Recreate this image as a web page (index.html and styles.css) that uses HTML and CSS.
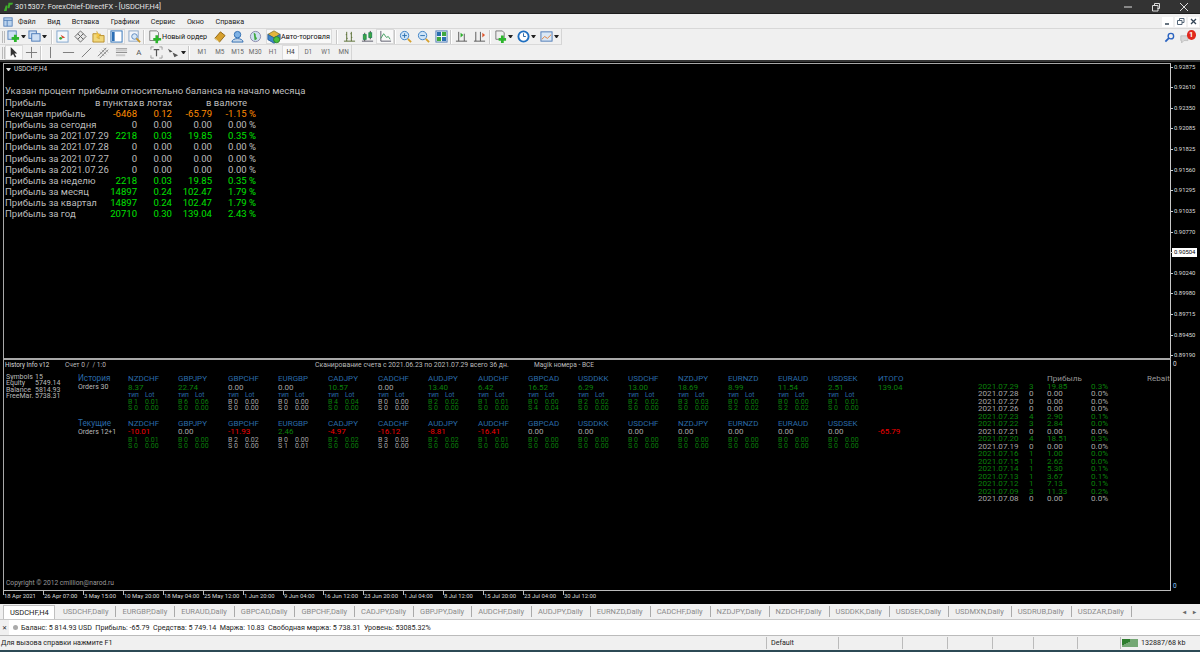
FILE: index.html
```html
<!DOCTYPE html>
<html lang="ru">
<head>
<meta charset="utf-8">
<title>3015307: ForexChief-DirectFX - [USDCHF,H4]</title>
<link rel="stylesheet" href="styles.css">
</head>
<body>
<div class="app">
  <header class="titlebar">
    <svg class="ticon" viewBox="0 0 12 12"><path d="M1 11 3 5h2l-1 6zM5 8l1-6h5l-1 2H8L7 8z" fill="#3fae2a"/></svg>
    <span class="ttext">3015307: ForexChief-DirectFX - [USDCHF,H4]</span>
    <div class="wbtns">
      <svg viewBox="0 0 10 10"><path d="M1 5h8" stroke="#ddd"/></svg>
      <svg viewBox="0 0 10 10"><path d="M1.500 3.500h5.500v5.500h-5.500zM3.500 3.500v-2h5v5h-2" fill="none" stroke="#ddd"/></svg>
      <svg viewBox="0 0 10 10"><path d="M1 1l8 8M9 1l-8 8" stroke="#ddd"/></svg>
    </div>
  </header>
  <nav class="menubar">
    <svg class="micon" viewBox="0 0 12 12"><rect x="1" y="1" width="10" height="10" fill="#bcd4ee" stroke="#4a78b5"/><path d="M1 4h10M5 4v7" stroke="#4a78b5"/></svg>
    <span class="mi">Файл</span><span class="mi">Вид</span><span class="mi">Вставка</span><span class="mi">Графики</span><span class="mi">Сервис</span><span class="mi">Окно</span><span>Справка</span>
    <div class="mdi">
      <span class="mdib"><svg viewBox="0 0 9 9"><path d="M2 7h4" stroke="#345" stroke-width="1.500"/></svg></span>
      <span class="mdib"><svg viewBox="0 0 9 9"><path d="M1.500 3.500h4.500v4h-4.500zM3.500 3.500v-2h4.500v4h-2" fill="none" stroke="#567"/></svg></span>
      <span class="mdib"><svg viewBox="0 0 9 9"><path d="M2 2l5 5M7 2l-5 5" stroke="#345" stroke-width="1.300"/></svg></span>
    </div>
  </nav>
  <div class="toolbars">
    <div class="tbrow">
      <div class="tb tb1">
        <i class="grip"></i>
        <span class="ib w16"><svg viewBox="0 0 14 14"><rect x="1" y="1" width="9" height="9" fill="#cfe0f4" stroke="#5b86bd"/><path d="M9 5v8M5 9h8" stroke="#2cb52c" stroke-width="3"/></svg></span><b class="dd"></b>
        <span class="ib w16"><svg viewBox="0 0 14 14"><rect x="1" y="1" width="8" height="8" fill="#cfe0f4" stroke="#4a78b5"/><rect x="4" y="4" width="9" height="8" fill="#cfe0f4" stroke="#4a78b5"/></svg></span><b class="dd"></b>
        <i class="sep sl4"></i>
        <span class="ib"><svg viewBox="0 0 14 14"><rect x="1" y="1" width="12" height="12" fill="#f4f8fc" stroke="#7ea3cc"/><path d="M5 5l5 3-3 1z" fill="#d94a2c"/><circle cx="5" cy="9" r="1.500" fill="#3ea83e"/></svg></span>
        <span class="ib"><svg viewBox="0 0 14 14"><path d="M7 1l3 3-3 3-3-3zM1 7l3-3 3 3-3 3zM13 7l-3-3-3 3 3 3zM7 13l3-3-3-3-3 3z" fill="#e8e8e8" stroke="#666"/></svg></span>
        <span class="ib"><svg viewBox="0 0 14 14"><path d="M1 4h5l1 2h6v7H1z" fill="#f1d77a" stroke="#b98e2a"/><path d="M5 1l1.500 3 3 .5-2 2 .5 3-3-1.500" fill="#f6c742" stroke="#b98e2a" stroke-width=".5"/></svg></span>
        <span class="ib on"><svg viewBox="0 0 14 14"><rect x="1" y="1" width="12" height="12" fill="#fff" stroke="#2c6fb5"/><rect x="2" y="2" width="3" height="10" fill="#2c6fb5"/></svg></span>
        <span class="ib"><svg viewBox="0 0 14 14"><rect x="1" y="1" width="10" height="11" fill="#f3f6fa" stroke="#8aa5c4"/><circle cx="7" cy="7" r="3" fill="#d7e8f7" stroke="#5b86bd"/><path d="M9 9l4 4" stroke="#c8962c" stroke-width="2"/></svg></span>
        <i class="sep sr2"></i>
        <span class="ib order"><svg viewBox="0 0 16 16"><path d="M2 1h8l2 2v9H2z" fill="#f5f5f5" stroke="#777"/><path d="M10 6v9M6 10.500h9" stroke="#2cb52c" stroke-width="3"/></svg><em class="lbl">Новый ордер</em></span>
        <span class="ib"><svg viewBox="0 0 14 14"><path d="M2 9l6-7 5 4-6 7z" fill="#d6a02e" stroke="#8f6414"/><path d="M2 9l5 4" stroke="#f4dc94"/></svg></span>
        <span class="ib"><svg viewBox="0 0 14 14"><circle cx="7" cy="5" r="3.500" fill="#7fb2e5" stroke="#2f6cb0"/><path d="M1 13c0-5 12-5 12 0z" fill="#c5d7ea" stroke="#2f6cb0"/></svg></span>
        <span class="ib"><svg viewBox="0 0 14 14"><circle cx="7" cy="7" r="5.500" fill="#cfe0f0" stroke="#88a"/><path d="M5 3c4 1 1 3 3 5s-2 3-2 3z" fill="#3ea83e"/></svg></span>
        <span class="ib auto"><svg viewBox="0 0 16 16"><path d="M1 5l7-4 7 4-7 4z" fill="#e3b53c" stroke="#8f7a2a"/><path d="M1 5v6l7 4 7-4V5L8 9z" fill="#3f85cc" stroke="#2a5f96"/><circle cx="11" cy="11" r="3.500" fill="#49c13f" stroke="#2a7f25"/></svg><em class="lbl">Авто-торговля</em></span>
        <i class="sep sl4 sr2"></i>
        <span class="ib"><svg viewBox="0 0 14 14"><path d="M1 12h12M4 2v10M3 5h1M4 9h1M9 2v10M8 4h1M9 8h1" stroke="#556b2f"/></svg></span>
        <span class="ib"><svg viewBox="0 0 14 14"><path d="M1 12h12" stroke="#556"/><path d="M4 3v9M10 1v9" stroke="#444"/><rect x="2.500" y="5" width="3" height="5" fill="#3ea83e" stroke="#285"/><rect x="8.500" y="3" width="3" height="5" fill="#3ea83e" stroke="#285"/></svg></span>
        <span class="ib on"><svg viewBox="0 0 14 14"><path d="M2 1v11h11" fill="none" stroke="#556"/><path d="M2 9l3-5 3 4 2-1 2 3" fill="none" stroke="#3a9a5a"/></svg></span>
        <i class="sep"></i>
        <span class="ib"><svg viewBox="0 0 14 14"><circle cx="6" cy="6" r="4.500" fill="#cfe4f7" stroke="#3b7fc4"/><path d="M6 3.500v5M3.500 6h5" stroke="#2a6fb0"/><path d="M9.500 9.500l3.500 3.500" stroke="#d6a02e" stroke-width="2"/></svg></span>
        <span class="ib"><svg viewBox="0 0 14 14"><circle cx="6" cy="6" r="4.500" fill="#cfe4f7" stroke="#3b7fc4"/><path d="M3.500 6h5" stroke="#2a6fb0"/><path d="M9.500 9.500l3.500 3.500" stroke="#d6a02e" stroke-width="2"/></svg></span>
        <span class="ib"><svg viewBox="0 0 14 14"><rect x="1" y="1" width="12" height="12" fill="#fff" stroke="#4a78b5"/><rect x="2" y="2" width="4.500" height="4.500" fill="#2a6fb0"/><rect x="7.500" y="2" width="4.500" height="4.500" fill="#3ea83e"/><rect x="2" y="7.500" width="4.500" height="4.500" fill="#3ea83e"/><rect x="7.500" y="7.500" width="4.500" height="4.500" fill="#2a6fb0"/></svg></span>
        <i class="sep"></i>
        <span class="ib"><svg viewBox="0 0 14 14"><path d="M1 12h12M4 2v10M10 4v8" stroke="#555"/><path d="M6 3l3 2.500L6 8z" fill="#2cae2c"/></svg></span>
        <span class="ib"><svg viewBox="0 0 14 14"><path d="M1 12h12M3 2v10M8 2v10" stroke="#555"/><path d="M10 3l3 2.500L10 8z" fill="#e0562c"/></svg></span>
        <i class="sep sl1 sr1"></i>
        <span class="ib w16"><svg viewBox="0 0 14 14"><path d="M2 1h7l2 2v7H2z" fill="#eee" stroke="#777"/><path d="M9 6v8M5 10h8" stroke="#2cb52c" stroke-width="3"/></svg></span><b class="dd"></b>
        <span class="ib w16 ml2"><svg viewBox="0 0 14 14"><circle cx="7" cy="7" r="5.500" fill="#fff" stroke="#1f6fc0" stroke-width="2"/><path d="M7 3.500V7h2.500" fill="none" stroke="#1f5f9f"/></svg></span><b class="dd"></b>
        <span class="ib w16 ml2"><svg viewBox="0 0 14 14"><rect x="1" y="2" width="12" height="10" fill="#dbe8f5" stroke="#4a78b5"/><path d="M2 10l3-3 3 2 4-4" fill="none" stroke="#e2803a"/></svg></span><b class="dd"></b>
      </div>
      <div class="tbright">
        <svg class="search" viewBox="0 0 12 12"><circle cx="7.500" cy="4.500" r="3" fill="none" stroke="#2a63c0" stroke-width="1.500"/><path d="M5.500 6.500l-4 4" stroke="#2a63c0" stroke-width="2"/></svg>
        <span class="chat"><svg viewBox="0 0 12 12"><path d="M1 2h9v6H5l-3 3V8H1z" fill="#d8d8d8" stroke="#bbb"/></svg><span class="badge">1</span></span>
      </div>
    </div>
    <div class="tbrow">
      <div class="tb tb2">
        <i class="grip"></i>
        <span class="ib on"><svg viewBox="0 0 14 14"><path d="M4 1v10l2.500-2.500 2 4 1.500-.8-2-3.700H11z" fill="#333"/></svg></span>
        <span class="ib"><svg viewBox="0 0 14 14"><path d="M7 1v12M1 7h12" stroke="#777"/></svg></span>
        <i class="sep"></i>
        <span class="ib"><svg viewBox="0 0 14 14"><path d="M7 1v12" stroke="#777"/></svg></span>
        <span class="ib"><svg viewBox="0 0 14 14"><path d="M1 7h12" stroke="#777"/></svg></span>
        <span class="ib"><svg viewBox="0 0 14 14"><path d="M2 12 12 2" stroke="#777"/></svg></span>
        <span class="ib"><svg viewBox="0 0 14 14"><path d="M1 11 10 2M3 13l9-9" stroke="#777"/><path d="M3 6l5 5M5 4l5 5M7 2l5 5" stroke="#aaa"/></svg></span>
        <span class="ib"><svg viewBox="0 0 14 14"><path d="M1 3h12M1 7h12" stroke="#888"/><path d="M1 5h12M1 10h10" stroke="#ccc" stroke-width="2"/></svg></span>
        <span class="ib txt">A</span>
        <span class="ib"><svg viewBox="0 0 14 14"><path d="M1 1h3M10 1h3M1 13h3M10 13h3M1 1v3M13 1v3M1 13v-3M13 13v-3" stroke="#999"/><path d="M4 4h6M7 4v7" stroke="#555" stroke-width="1.300"/></svg></span>
        <span class="ib w16"><svg viewBox="0 0 14 14"><path d="M1 3l5 3-3 1zM6 7l6 3-4 2z" fill="#555"/></svg></span><b class="dd"></b>
        <i class="sep sl2 sr3"></i>
        <span class="per">M1</span><span class="per">M5</span><span class="per">M15</span><span class="per">M30</span><span class="per">H1</span><span class="per act">H4</span><span class="per">D1</span><span class="per">W1</span><span class="per">MN</span>
      </div>
    </div>
  </div>

  <main class="chart">
    <div class="plot">
      <section class="pane top">
        <div class="ctitle"><b class="ctri"></b>USDCHF,H4</div>
        <div class="note">Указан процент прибыли относительно баланса на начало месяца</div>
        <div class="ptable">
          <span>Прибыль</span><span class="hp">в пунктах</span><span class="hl">в лотах</span><span class="hc">в валюте</span>
          <span>Текущая прибыль</span><span class="r o">-6468</span><span class="r o">0.12</span><span class="r o">-65.79</span><span class="r o">-1.15 %</span>
          <span>Прибыль за сегодня</span><span class="r">0</span><span class="r">0.00</span><span class="r">0.00</span><span class="r">0.00 %</span>
          <span>Прибыль за 2021.07.29</span><span class="r l">2218</span><span class="r l">0.03</span><span class="r l">19.85</span><span class="r l">0.35 %</span>
          <span>Прибыль за 2021.07.28</span><span class="r">0</span><span class="r">0.00</span><span class="r">0.00</span><span class="r">0.00 %</span>
          <span>Прибыль за 2021.07.27</span><span class="r">0</span><span class="r">0.00</span><span class="r">0.00</span><span class="r">0.00 %</span>
          <span>Прибыль за 2021.07.26</span><span class="r">0</span><span class="r">0.00</span><span class="r">0.00</span><span class="r">0.00 %</span>
          <span>Прибыль за неделю</span><span class="r l">2218</span><span class="r l">0.03</span><span class="r l">19.85</span><span class="r l">0.35 %</span>
          <span>Прибыль за месяц</span><span class="r l">14897</span><span class="r l">0.24</span><span class="r l">102.47</span><span class="r l">1.79 %</span>
          <span>Прибыль за квартал</span><span class="r l">14897</span><span class="r l">0.24</span><span class="r l">102.47</span><span class="r l">1.79 %</span>
          <span>Прибыль за год</span><span class="r l">20710</span><span class="r l">0.30</span><span class="r l">139.04</span><span class="r l">2.43 %</span>
        </div>
      </section>
      <section class="pane sub">
        <div class="subhead">
          <span class="sh1">History Info v12</span><span class="sh2">Счет 0 /  / 1:0</span><span class="sh3">Сканирование счета с 2021.06.23 по 2021.07.29 всего 36 дн.</span><span>Magik номера - ВСЕ</span>
        </div>
        <div class="subbody">
          <div class="acct">
            <div><span>Symbols</span><span>15</span></div>
            <div><span>Equity</span><span>5749.14</span></div>
            <div><span>Balance</span><span>5814.93</span></div>
            <div><span>FreeMar.</span><span>5738.31</span></div>
          </div>
          <div class="blocks">
            <div class="block hist">
              <div class="rowlab"><div class="nm big">История</div><div class="ord">Orders 30</div></div>
              <div class="sym g"><div class="nm">NZDCHF</div><div class="val">8.37</div><div class="tl"><span>тип</span><span>Lot</span></div><div class="bs"><span>B 1</span><span>0.01</span></div><div class="bs"><span>S 0</span><span>0.00</span></div></div>
              <div class="sym g"><div class="nm">GBPJPY</div><div class="val">22.74</div><div class="tl"><span>тип</span><span>Lot</span></div><div class="bs"><span>B 6</span><span>0.06</span></div><div class="bs"><span>S 0</span><span>0.00</span></div></div>
              <div class="sym s"><div class="nm">GBPCHF</div><div class="val">0.00</div><div class="tl"><span>тип</span><span>Lot</span></div><div class="bs"><span>B 0</span><span>0.00</span></div><div class="bs"><span>S 0</span><span>0.00</span></div></div>
              <div class="sym s"><div class="nm">EURGBP</div><div class="val">0.00</div><div class="tl"><span>тип</span><span>Lot</span></div><div class="bs"><span>B 0</span><span>0.00</span></div><div class="bs"><span>S 0</span><span>0.00</span></div></div>
              <div class="sym g"><div class="nm">CADJPY</div><div class="val">10.57</div><div class="tl"><span>тип</span><span>Lot</span></div><div class="bs"><span>B 4</span><span>0.04</span></div><div class="bs"><span>S 0</span><span>0.00</span></div></div>
              <div class="sym s"><div class="nm">CADCHF</div><div class="val">0.00</div><div class="tl"><span>тип</span><span>Lot</span></div><div class="bs"><span>B 0</span><span>0.00</span></div><div class="bs"><span>S 0</span><span>0.00</span></div></div>
              <div class="sym g"><div class="nm">AUDJPY</div><div class="val">13.40</div><div class="tl"><span>тип</span><span>Lot</span></div><div class="bs"><span>B 2</span><span>0.02</span></div><div class="bs"><span>S 0</span><span>0.00</span></div></div>
              <div class="sym g"><div class="nm">AUDCHF</div><div class="val">6.42</div><div class="tl"><span>тип</span><span>Lot</span></div><div class="bs"><span>B 1</span><span>0.01</span></div><div class="bs"><span>S 0</span><span>0.00</span></div></div>
              <div class="sym g"><div class="nm">GBPCAD</div><div class="val">16.52</div><div class="tl"><span>тип</span><span>Lot</span></div><div class="bs"><span>B 0</span><span>0.00</span></div><div class="bs"><span>S 4</span><span>0.04</span></div></div>
              <div class="sym g"><div class="nm">USDDKK</div><div class="val">6.29</div><div class="tl"><span>тип</span><span>Lot</span></div><div class="bs"><span>B 2</span><span>0.02</span></div><div class="bs"><span>S 0</span><span>0.00</span></div></div>
              <div class="sym g"><div class="nm">USDCHF</div><div class="val">13.00</div><div class="tl"><span>тип</span><span>Lot</span></div><div class="bs"><span>B 2</span><span>0.02</span></div><div class="bs"><span>S 0</span><span>0.00</span></div></div>
              <div class="sym g"><div class="nm">NZDJPY</div><div class="val">18.69</div><div class="tl"><span>тип</span><span>Lot</span></div><div class="bs"><span>B 3</span><span>0.03</span></div><div class="bs"><span>S 0</span><span>0.00</span></div></div>
              <div class="sym g"><div class="nm">EURNZD</div><div class="val">8.99</div><div class="tl"><span>тип</span><span>Lot</span></div><div class="bs"><span>B 0</span><span>0.00</span></div><div class="bs"><span>S 2</span><span>0.02</span></div></div>
              <div class="sym g"><div class="nm">EURAUD</div><div class="val">11.54</div><div class="tl"><span>тип</span><span>Lot</span></div><div class="bs"><span>B 0</span><span>0.00</span></div><div class="bs"><span>S 2</span><span>0.02</span></div></div>
              <div class="sym g"><div class="nm">USDSEK</div><div class="val">2.51</div><div class="tl"><span>тип</span><span>Lot</span></div><div class="bs"><span>B 1</span><span>0.01</span></div><div class="bs"><span>S 0</span><span>0.00</span></div></div>
              <div class="sym g"><div class="nm">ИТОГО</div><div class="val">139.04</div></div>
            </div>
            <div class="block cur">
              <div class="rowlab"><div class="nm big">Текущие</div><div class="ord">Orders 12+1</div></div>
              <div class="sym g"><div class="nm">NZDCHF</div><div class="val red">-10.01</div><div class="bs"><span>B 1</span><span>0.01</span></div><div class="bs"><span>S 0</span><span>0.00</span></div></div>
              <div class="sym g"><div class="nm">GBPJPY</div><div class="val sil">0.00</div><div class="bs"><span>B 0</span><span>0.00</span></div><div class="bs"><span>S 0</span><span>0.00</span></div></div>
              <div class="sym s"><div class="nm">GBPCHF</div><div class="val red">-11.93</div><div class="bs"><span>B 2</span><span>0.02</span></div><div class="bs"><span>S 0</span><span>0.00</span></div></div>
              <div class="sym s"><div class="nm">EURGBP</div><div class="val grn">2.46</div><div class="bs"><span>B 0</span><span>0.00</span></div><div class="bs"><span>S 1</span><span>0.01</span></div></div>
              <div class="sym g"><div class="nm">CADJPY</div><div class="val red">-4.97</div><div class="bs"><span>B 2</span><span>0.02</span></div><div class="bs"><span>S 0</span><span>0.00</span></div></div>
              <div class="sym s"><div class="nm">CADCHF</div><div class="val red">-16.12</div><div class="bs"><span>B 3</span><span>0.03</span></div><div class="bs"><span>S 0</span><span>0.00</span></div></div>
              <div class="sym g"><div class="nm">AUDJPY</div><div class="val red">-8.81</div><div class="bs"><span>B 2</span><span>0.02</span></div><div class="bs"><span>S 0</span><span>0.00</span></div></div>
              <div class="sym g"><div class="nm">AUDCHF</div><div class="val red">-16.41</div><div class="bs"><span>B 1</span><span>0.01</span></div><div class="bs"><span>S 0</span><span>0.00</span></div></div>
              <div class="sym g"><div class="nm">GBPCAD</div><div class="val sil">0.00</div><div class="bs"><span>B 0</span><span>0.00</span></div><div class="bs"><span>S 0</span><span>0.00</span></div></div>
              <div class="sym g"><div class="nm">USDDKK</div><div class="val sil">0.00</div><div class="bs"><span>B 0</span><span>0.00</span></div><div class="bs"><span>S 0</span><span>0.00</span></div></div>
              <div class="sym g"><div class="nm">USDCHF</div><div class="val sil">0.00</div><div class="bs"><span>B 0</span><span>0.00</span></div><div class="bs"><span>S 0</span><span>0.00</span></div></div>
              <div class="sym g"><div class="nm">NZDJPY</div><div class="val sil">0.00</div><div class="bs"><span>B 0</span><span>0.00</span></div><div class="bs"><span>S 0</span><span>0.00</span></div></div>
              <div class="sym g"><div class="nm">EURNZD</div><div class="val sil">0.00</div><div class="bs"><span>B 0</span><span>0.00</span></div><div class="bs"><span>S 0</span><span>0.00</span></div></div>
              <div class="sym g"><div class="nm">EURAUD</div><div class="val sil">0.00</div><div class="bs"><span>B 0</span><span>0.00</span></div><div class="bs"><span>S 0</span><span>0.00</span></div></div>
              <div class="sym g"><div class="nm">USDSEK</div><div class="val sil">0.00</div><div class="bs"><span>B 0</span><span>0.00</span></div><div class="bs"><span>S 0</span><span>0.00</span></div></div>
              <div class="sym g"><div class="nm hid">&nbsp;</div><div class="val red">-65.79</div></div>
            </div>
          </div>
          <div class="daily">
            <div class="dhead"><span></span><span></span><span class="nm2">Прибыль</span><span class="nm2">Rebait</span></div>
            <div class="dr g"><span>2021.07.29</span><span>3</span><span>19.85</span><span>0.3%</span></div>
            <div class="dr s"><span>2021.07.28</span><span>0</span><span>0.00</span><span>0.0%</span></div>
            <div class="dr s"><span>2021.07.27</span><span>0</span><span>0.00</span><span>0.0%</span></div>
            <div class="dr s"><span>2021.07.26</span><span>0</span><span>0.00</span><span>0.0%</span></div>
            <div class="dr g"><span>2021.07.23</span><span>4</span><span>2.90</span><span>0.1%</span></div>
            <div class="dr g"><span>2021.07.22</span><span>3</span><span>2.84</span><span>0.0%</span></div>
            <div class="dr s"><span>2021.07.21</span><span>0</span><span>0.00</span><span>0.0%</span></div>
            <div class="dr g"><span>2021.07.20</span><span>4</span><span>18.51</span><span>0.3%</span></div>
            <div class="dr s"><span>2021.07.19</span><span>0</span><span>0.00</span><span>0.0%</span></div>
            <div class="dr g"><span>2021.07.16</span><span>1</span><span>1.00</span><span>0.0%</span></div>
            <div class="dr g"><span>2021.07.15</span><span>1</span><span>2.62</span><span>0.0%</span></div>
            <div class="dr g"><span>2021.07.14</span><span>1</span><span>5.30</span><span>0.1%</span></div>
            <div class="dr g"><span>2021.07.13</span><span>1</span><span>3.67</span><span>0.1%</span></div>
            <div class="dr g"><span>2021.07.12</span><span>1</span><span>7.13</span><span>0.1%</span></div>
            <div class="dr g"><span>2021.07.09</span><span>3</span><span>11.33</span><span>0.2%</span></div>
            <div class="dr s"><span>2021.07.08</span><span>0</span><span>0.00</span><span>0.0%</span></div>
          </div>
        </div>
        <div class="copy">Copyright © 2012 cmillion@narod.ru</div>
      </section>
      <div class="timeaxis">
        <span>18 Apr 2021</span><span>26 Apr 07:00</span><span>3 May 15:00</span><span>10 May 20:00</span><span>18 May 04:00</span><span>25 May 12:00</span><span>1 Jun 20:00</span><span>9 Jun 04:00</span><span>16 Jun 12:00</span><span>23 Jun 20:00</span><span>1 Jul 04:00</span><span>8 Jul 12:00</span><span>15 Jul 20:00</span><span>23 Jul 04:00</span><span>30 Jul 12:00</span>
      </div>
    </div>
    <aside class="prices">
      <div class="ptop">
        <span>0.92875</span><span>0.92610</span><span>0.92350</span><span>0.92085</span><span>0.91825</span><span>0.91560</span><span>0.91295</span><span>0.91035</span><span>0.90770</span><span class="now">0.90504</span><span>0.90240</span><span>0.89980</span><span>0.89715</span><span>0.89450</span><span>0.89190</span>
      </div>
      <div class="pzero"><span>0</span><span class="z2">0</span></div>
    </aside>
  </main>

  <div class="tabs">
    <span class="tab active">USDCHF,H4</span><span class="tab">USDCHF,Daily</span><span class="tab">EURGBP,Daily</span><span class="tab">EURAUD,Daily</span><span class="tab">GBPCAD,Daily</span><span class="tab">GBPCHF,Daily</span><span class="tab">CADJPY,Daily</span><span class="tab">GBPJPY,Daily</span><span class="tab">AUDCHF,Daily</span><span class="tab">AUDJPY,Daily</span><span class="tab">EURNZD,Daily</span><span class="tab">CADCHF,Daily</span><span class="tab">NZDJPY,Daily</span><span class="tab">NZDCHF,Daily</span><span class="tab">USDDKK,Daily</span><span class="tab">USDSEK,Daily</span><span class="tab">USDMXN,Daily</span><span class="tab">USDRUB,Daily</span><span class="tab">USDZAR,Daily</span>
    <span class="arrows"><b>◂</b><b>▸</b></span>
  </div>
  <div class="terminal">
    <span class="tclose">✕</span>
    <span class="tdot"></span>
    <span>Баланс: 5 814.93 USD  Прибыль: -65.79  Средства: 5 749.14  Маржа: 10.83  Свободная маржа: 5 738.31  Уровень: 53085.32%</span>
  </div>
  <footer class="status">
    <span class="st1">Для вызова справки нажмите F1</span>
    <span class="cell c72">Default</span>
    <span class="cell c64"></span><span class="cell c45"></span><span class="cell c45"></span><span class="cell c41"></span><span class="cell c44"></span><span class="cell c43"></span>
    <span class="cell st7"><svg viewBox="0 0 16 8"><rect width="16" height="8" fill="#2d7d2d"/><path d="M9 8V0M11 8V0M13 8V0M15 8V0M1 8V6M3 8V5M5 8V4M7 8V3" stroke="#dfe8df" stroke-width=".8"/></svg>132887/68 kb</span>
  </footer>
  <div class="taskstrip"></div>
</div>
</body>
</html>
```

FILE: styles.css
```css
* { box-sizing: border-box; }
html, body { margin: 0; padding: 0; background: #000; }
body { width: 1200px; height: 652px; overflow: hidden; font-family: Roboto, "Noto Sans", "Liberation Sans", sans-serif; }
.app { width: 1200px; height: 652px; display: flex; flex-direction: column; background: #f0f0f0; color: #222; font-size: 7.2px; }
em { font-style: normal; }

.titlebar { height: 14px; background: #333; color: #e6e6e6; display: flex; align-items: center; padding-left: 3px; font-size: 7.400px; border-bottom: 1px solid #1c1c1c; flex: none; }
.ticon { width: 11px; height: 11px; margin-right: 1px; }
.wbtns { margin-left: auto; display: flex; gap: 18px; padding-right: 11px; }
.wbtns svg { width: 10px; height: 10px; }

.menubar { height: 13px; display: flex; align-items: center; padding-left: 3px; background: #f0f0f0; font-size: 7.200px; flex: none; margin-top: 1px; }
.menubar span { white-space: nowrap; }
.micon { width: 10px; height: 10px; margin-right: 5px; }
.mi { margin-right: 11.500px; }
.mdi { margin-left: auto; display: flex; gap: 2px; padding-right: 1px; }
.mdib { width: 11px; height: 10px; background: #fff; display: flex; align-items: center; justify-content: center; }
.mdib svg { width: 9px; height: 9px; }

.toolbars { background: #f0f0f0; flex: none; border-top: 1px solid #d8d8d8; height: 32px; }
.tbrow { height: 16px; display: flex; }
.tb { display: flex; align-items: center; height: 16px; border-right: 1px solid #d5d5d5; border-bottom: 1px solid #d9d9d9; background: #f0f0f0; padding-left: 2px; }
.tb1 { width: 562px; }
.tb2 { width: 352px; }
.grip { width: 3px; height: 12px; border-left: 1px solid #bbb; border-right: 1px solid #bbb; flex: none; }
.ib { width: 18px; height: 15px; display: inline-flex; align-items: center; justify-content: center; flex: none; white-space: nowrap; }
.tb2 .ib { width: 17.600px; }
.ib svg { width: 13px; height: 13px; flex: none; }
.ib.w16, .tb2 .ib.w16 { width: 16px; }
.ml2 { margin-left: 2px; }
.on { background: #f9f9f9; box-shadow: inset 0 0 0 1px #dcdcdc; }
.dd { width: 5px; height: 0; border: 2.500px solid transparent; border-top: 3px solid #222; border-bottom: 0; flex: none; }
.sep { width: 2px; height: 14px; background: #c9c9c9; border-right: 1px solid #fff; flex: none; }
.sl1 { margin-left: 1px; }
.sl2 { margin-left: 2px; }
.sl4 { margin-left: 4px; }
.sr1 { margin-right: 1px; }
.sr2 { margin-right: 2px; }
.sr3 { margin-right: 3px; }
.ib.order { width: 63px; justify-content: flex-start; padding-left: 1px; }
.ib.order svg { width: 14px; height: 14px; }
.ib.auto { width: 66px; margin-left: 2px; background: #f9f9f9; box-shadow: inset 0 0 0 1px #dcdcdc; justify-content: flex-start; padding-left: 1px; }
.ib.auto svg { width: 14px; height: 14px; }
.lbl { font-size: 7.200px; color: #111; }
.txt { font-size: 8px; color: #555; }
.per { width: 17.700px; text-align: center; font-size: 6.400px; color: #666; height: 15px; line-height: 15px; flex: none; }
.act { background: #f9f9f9; box-shadow: inset 0 0 0 1px #dcdcdc; color: #333; }
.tbright { margin-left: auto; display: flex; align-items: center; padding-right: 4px; gap: 5px; height: 16px; }
.search { width: 11px; height: 11px; }
.chat { display: flex; width: 16px; height: 14px; align-items: flex-end; }
.chat svg { width: 10px; height: 10px; }
.badge { width: 10px; height: 10px; border-radius: 50%; background: #e0281c; color: #fff; font-size: 7.500px; font-weight: 700; line-height: 10px; text-align: center; align-self: flex-start; margin-left: -3px; }

.chart { height: 544px; flex: none; background: #000; display: flex; color: #bdbdbd; border-top: 2px solid #333; }
.plot { width: 1171px; display: flex; flex-direction: column; padding-left: 3px; padding-top: 1px; }
.pane { border: 1px solid #a8a8a8; border-bottom: 0; border-right: 1px solid #c8c8c8; flex: none; }
.top { height: 295px; padding-left: 1px; }
.ctitle { font-size: 6.400px; color: #ddd; height: 10px; line-height: 10px; display: flex; align-items: center; }
.ctri { width: 5px; height: 0; border: 2.500px solid transparent; border-top: 3px solid #ddd; border-bottom: 0; margin: 0 3px 0 1px; }
.note, .ptable { font-size: 9.550px; line-height: 11.200px; }
.note { margin-top: 11.400px; height: 11.200px; white-space: nowrap; }
.ptable { display: grid; grid-template-columns: 90px 42px 35px 40px 44px; grid-auto-rows: 11.200px; color: #bcbcbc; }
.ptable span { white-space: nowrap; }
.r { text-align: right; }
.ptable .o { color: #ff8c00; }
.ptable .l { color: #00e000; }
.hl { padding-left: 2px; }
.hc { padding-left: 34px; grid-column: span 2; }

.sub { height: 232px; border-top: 2px solid #a8a8a8; position: relative; display: flex; flex-direction: column; padding-left: 1px; }
.subhead { height: 10px; flex: none; display: flex; align-items: center; white-space: pre; font-size: 6.600px; color: #bbb; }
.sh1 { width: 60px; color: #ddd; font-size: 6.300px; }
.sh2 { width: 250px; }
.sh3 { width: 219px; font-size: 6.850px; }
.subbody { display: flex; flex: 1; }
.acct { width: 73px; padding: 4px 0 0 1px; font-size: 7px; line-height: 6.400px; color: #bbb; flex: none; }
.acct div { display: grid; grid-template-columns: 29px auto; white-space: nowrap; }
.blocks { width: 900px; padding-top: 3.500px; flex: none; }
.block { display: grid; grid-template-columns: repeat(17, 50px); }
.hist { height: 45px; }
.nm { color: #2a6aa8; font-size: 8px; line-height: 9px; white-space: nowrap; }
.big { font-size: 8.200px; }
.ord { color: #bbb; font-size: 7px; line-height: 8px; white-space: nowrap; }
.val { font-size: 8px; line-height: 9px; }
.tl { display: grid; grid-template-columns: 17px auto; color: #2a6aa8; font-size: 6.600px; line-height: 7px; }
.bs { display: grid; grid-template-columns: 17px auto; font-size: 7px; line-height: 6.400px; }
.cur .val { margin-bottom: 1px; line-height: 8px; }
.g { color: #0a800a; }
.s { color: #a6a6a6; }
.val.red { color: #f00000; }
.val.sil { color: #a6a6a6; }
.val.grn { color: #0a800a; }
.hid { visibility: hidden; }
.daily { padding-top: 3.500px; font-size: 8.100px; line-height: 7.530px; flex: 1; }
.dhead { display: grid; grid-template-columns: 51px 18px 100px auto; height: 9px; line-height: 9px; }
.nm2 { color: #999; white-space: nowrap; }
.dr { display: grid; grid-template-columns: 51px 18px 44px auto; white-space: nowrap; }
.copy { color: #999; font-size: 6.700px; height: 10px; line-height: 10px; position: absolute; left: 2px; bottom: 2px; }

.timeaxis { height: 13px; border-top: 1px solid #bbb; display: grid; grid-template-columns: repeat(15, 40px); font-size: 5.900px; color: #ddd; white-space: nowrap; flex: none; }
.timeaxis span { border-left: 1px solid #bbb; height: 4px; line-height: 11px; }

.prices { width: 29px; display: flex; flex-direction: column; font-size: 5.900px; color: #ddd; padding-top: .5px; }
.ptop { height: 295px; display: flex; flex-direction: column; flex: none; }
.ptop span { height: 20.640px; flex: none; line-height: 9px; padding-left: 3px; position: relative; white-space: nowrap; }
.ptop span::before { content: ""; position: absolute; left: 0; top: 4px; width: 2px; height: 1px; background: #ccc; }
.ptop .now { color: #000; background: linear-gradient(#fff, #fff) no-repeat 1px 0 / 25px 9px; }
.pzero { flex: none; height: 230px; margin-top: 2px; display: flex; flex-direction: column; justify-content: space-between; padding-left: 2px; font-size: 6.500px; line-height: 8px; }
.z2 { color: #8cf; }

.tabs { height: 16px; flex: none; background: #f0f0f0; display: flex; align-items: center; padding-left: 3px; font-size: 7.500px; color: #8a8a8a; border-bottom: 1px solid #c8c8c8; }
.tab { padding: 0 7px 0 6px; border-right: 1px solid #aaa; line-height: 11px; white-space: nowrap; height: 11px; flex: none; }
.tab.active { color: #222; background: #fff; height: 14px; line-height: 14px; border: 1px solid #c0c0c0; border-bottom: 0; padding: 0 6px; width: 52px; margin-right: 2px; }
.arrows { margin-left: auto; display: flex; gap: 7px; padding-right: 4px; font-size: 6px; color: #666; }
.terminal { height: 16px; flex: none; background: #fff; display: flex; align-items: center; font-size: 7.150px; white-space: pre; border-bottom: 1px solid #bbb; color: #222; }
.tclose { width: 9px; background: #f0f0f0; height: 15px; font-size: 6px; line-height: 15px; text-align: center; margin-right: 4px; }
.tdot { width: 5px; height: 5px; border-radius: 50%; background: #aaa; margin-right: 3px; }
.status { height: 14px; flex: none; background: #f0f0f0; display: flex; align-items: center; font-size: 7.150px; color: #222; white-space: nowrap; }
.status span { height: 12px; line-height: 12px; }
.st1 { width: 766px; padding-left: 1px; }
.cell { border-left: 1px solid #bbb; padding-left: 4px; }
.c72 { width: 72px; } .c64 { width: 64px; } .c45 { width: 45px; } .c41 { width: 41px; } .c44 { width: 44px; } .c43 { width: 43px; }
.st7 { display: flex; align-items: center; gap: 3px; padding-left: 1px; flex: 1; }
.st7 svg { width: 16px; height: 8px; }
.taskstrip { flex: 1; background: #2c4a55; }
```
